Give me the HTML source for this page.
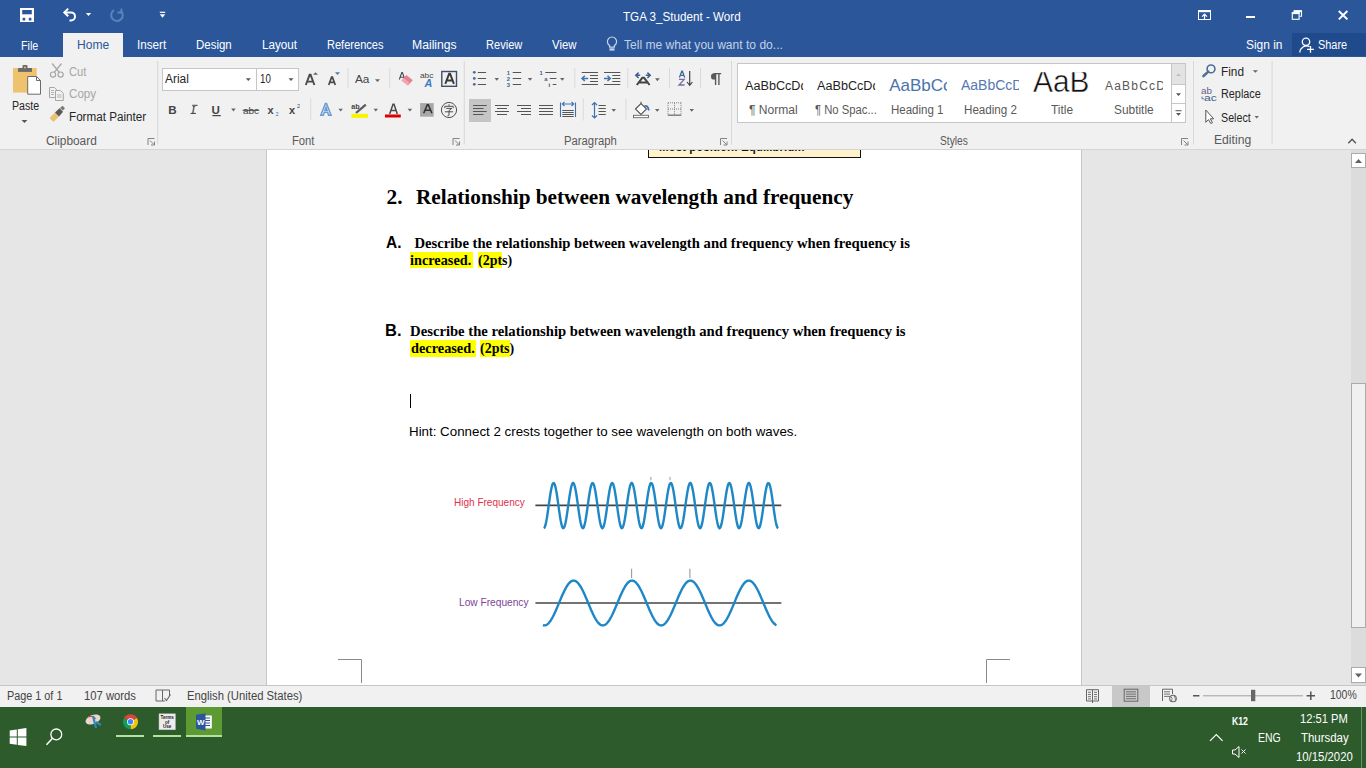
<!DOCTYPE html>
<html><head><meta charset="utf-8"><style>
*{margin:0;padding:0;box-sizing:border-box}
html,body{width:1366px;height:768px;overflow:hidden;background:#E6E6E6;position:relative;font-family:"Liberation Sans",sans-serif}
.t{position:absolute;white-space:nowrap;transform-origin:0 0}
.r{position:absolute}
svg{position:absolute;overflow:visible}

</style></head><body>
<div class="r" style="left:0px;top:0px;width:1366px;height:57px;background:#2B579A;"></div>
<div class="r" style="left:63px;top:33px;width:60px;height:24px;background:#F1F1F1;"></div>
<div class="r" style="left:1292px;top:33px;width:74px;height:23px;background:#1F4B8C;"></div>
<div class="r" style="left:0px;top:57px;width:1366px;height:92px;background:#F1F1F1;"></div>
<div class="r" style="left:0px;top:149px;width:1366px;height:1px;background:#D4D4D4;"></div>
<div class="r" style="left:266px;top:150px;width:1px;height:535px;background:#C6C6C6;"></div>
<div class="r" style="left:267px;top:150px;width:814px;height:535px;background:#fff;"></div>
<div class="r" style="left:1081px;top:150px;width:1px;height:535px;background:#C6C6C6;"></div>
<div class="r" style="left:1351px;top:150px;width:15px;height:535px;background:#DCDCDC;"></div>
<div class="r" style="left:0px;top:685px;width:1366px;height:1px;background:#C6C6C6;"></div>
<div class="r" style="left:0px;top:686px;width:1366px;height:21px;background:#F1F1F1;"></div>
<div class="r" style="left:0px;top:707px;width:1366px;height:61px;background:#2D5B2B;"></div>
<div class="r" style="left:162px;top:68px;width:137px;height:23px;background:#fff;border:1px solid #C6C6C6"></div>
<div class="r" style="left:256px;top:69px;width:1px;height:21px;background:#C6C6C6;"></div>
<div class="r" style="left:737px;top:63px;width:449px;height:60px;background:#fff;border:1px solid #C6C6C6"></div>
<div class="r" style="left:1171px;top:63px;width:15px;height:60px;background:#fff;border:1px solid #C6C6C6"></div>
<div class="r" style="left:1172px;top:64px;width:13px;height:20px;background:#E3E3E3;"></div>
<div class="r" style="left:1171px;top:84px;width:15px;height:1px;background:#C6C6C6;"></div>
<div class="r" style="left:1171px;top:103px;width:15px;height:1px;background:#C6C6C6;"></div>
<div class="r" style="left:469px;top:99px;width:22px;height:23px;background:#C5C5C5;"></div>
<div class="r" style="left:1112px;top:686px;width:38px;height:21px;background:#C8C8C8;"></div>
<div class="r" style="left:186px;top:707px;width:36px;height:30px;background:#5E9A34;"></div>
<div class="r" style="left:116px;top:735px;width:28px;height:2px;background:#B4E29A;"></div>
<div class="r" style="left:153px;top:735px;width:28px;height:2px;background:#B4E29A;"></div>
<div class="r" style="left:186px;top:735px;width:36px;height:2px;background:#B4E29A;"></div>
<div class="r" style="left:410px;top:252px;width:63px;height:16px;background:#FFFF00;"></div>
<div class="r" style="left:477.6px;top:252px;width:24.4px;height:16px;background:#FFFF00;"></div>
<div class="r" style="left:410px;top:340px;width:66px;height:16.5px;background:#FFFF00;"></div>
<div class="r" style="left:479.5px;top:340px;width:30.5px;height:16.5px;background:#FFFF00;"></div>
<div class="r" style="left:648px;top:150px;width:213px;height:7.6px;background:#FFF2CC;border:1.7px solid #111;border-top:none"></div>
<div class="r" style="left:410px;top:394px;width:1px;height:14px;background:#000;"></div>
<div class="r" style="left:1351px;top:153px;width:15px;height:15px;background:#fff;border:1px solid #ABABAB"></div>
<div class="r" style="left:1351px;top:383px;width:15px;height:245px;background:#F0F0F0;border:1px solid #ABABAB"></div>
<div class="r" style="left:1351px;top:667px;width:15px;height:16px;background:#fff;border:1px solid #ABABAB"></div>
<svg width="1366" height="768" style="left:0;top:0" viewBox="0 0 1366 768">
<rect x="20" y="8" width="14" height="14" fill="#fff"/>
<rect x="22.2" y="10" width="9.6" height="4.3" fill="#2B579A"/>
<rect x="22.6" y="17.8" width="2.6" height="2.7" fill="#2B579A"/>
<rect x="28.8" y="17.8" width="2.6" height="2.7" fill="#2B579A"/>
<path d="M65 12.4H71A4 4 0 0 1 71 20.4H69.5" fill="none" stroke="#fff" stroke-width="2"/>
<path d="M68.2 8.6L64.3 12.4L68.2 16.2" fill="none" stroke="#fff" stroke-width="2"/>
<path d="M85.8 13H91.2L88.5 15.9Z" fill="#fff"/>
<path d="M114 10.2A5.8 5.8 0 1 0 120.5 10.6" fill="none" stroke="#5B83BE" stroke-width="2"/>
<path d="M121.5 8.5V12.5H117.5" fill="none" stroke="#5B83BE" stroke-width="1.8"/>
<rect x="159.8" y="11.7" width="5.4" height="1.2" fill="#fff"/>
<path d="M159.8 14.3H165.2L162.5 17.7Z" fill="#fff"/>
<rect x="1198.5" y="10.5" width="12" height="9" fill="none" stroke="#fff" stroke-width="1"/>
<rect x="1198" y="10" width="13" height="2.2" fill="#fff"/>
<path d="M1204.5 19.5V14.2M1202 16.6L1204.5 14.2L1207 16.6" fill="none" stroke="#fff" stroke-width="1.2"/>
<rect x="1246" y="16" width="9" height="2" fill="#fff"/>
<path d="M1294.2 12.3V10.9H1301.5V16.3H1299.5" fill="none" stroke="#fff" stroke-width="1.1"/>
<rect x="1293.7" y="10.4" width="8.3" height="1.8" fill="#fff"/>
<rect x="1292.3" y="12.8" width="6.8" height="6.5" fill="none" stroke="#fff" stroke-width="1.1"/>
<rect x="1291.8" y="12.3" width="7.8" height="1.8" fill="#fff"/>
<path d="M1338.8 11L1347.4 19.4M1347.4 11L1338.8 19.4" stroke="#fff" stroke-width="2"/>
<circle cx="1306" cy="41.8" r="3.7" fill="none" stroke="#fff" stroke-width="1.3"/>
<path d="M1299.8 52.5A6.8 6.8 0 0 1 1309.5 46.6" fill="none" stroke="#fff" stroke-width="1.3"/>
<path d="M1310.5 46V52.8M1307.1 49.4H1313.9" stroke="#fff" stroke-width="1.3"/>
<path d="M609.6 47.2V45.5A4.6 4.6 0 1 1 614.4 45.5V47.2Z" fill="none" stroke="#C6D4EC" stroke-width="1.2"/>
<rect x="609.5" y="48.3" width="5" height="2.3" fill="#C6D4EC"/>
<rect x="13" y="68" width="23.7" height="24.6" fill="#EFC36E"/>
<rect x="18.1" y="68" width="13.9" height="3.9" fill="#6A6A6A"/>
<rect x="22.5" y="65" width="5" height="4" rx="1" fill="#6A6A6A"/>
<circle cx="25" cy="67.5" r="0.9" fill="#EFC36E"/>
<path d="M27.7 76.5H36.5L40.5 80.5V94.2H27.7Z" fill="#fff" stroke="#6A6A6A" stroke-width="1"/>
<path d="M36.5 76.5V80.5H40.5" fill="none" stroke="#6A6A6A" stroke-width="1"/>
<path d="M21.5 120H27.4L24.45 123Z" fill="#555"/>
<circle cx="53" cy="74.6" r="2.6" fill="none" stroke="#A6A6A6" stroke-width="1.2"/>
<circle cx="60.6" cy="74.6" r="2.6" fill="none" stroke="#A6A6A6" stroke-width="1.2"/>
<path d="M54.3 72.3L61.5 63.5M59.3 72.3L52.1 63.5" stroke="#A6A6A6" stroke-width="1.3"/>
<path d="M49.5 87.5H54.5L56.5 89.5V97.5H49.5Z" fill="#F1F1F1" stroke="#A6A6A6" stroke-width="1"/>
<path d="M51 90.5H54M51 92.5H54M51 94.5H54" stroke="#A6A6A6" stroke-width="0.8"/>
<path d="M55.5 90.5H60.5L63.3 93.3V100.5H55.5Z" fill="#F1F1F1" stroke="#A6A6A6" stroke-width="1"/>
<path d="M57 95H61.5M57 97H61.5" stroke="#A6A6A6" stroke-width="0.8"/>
<path d="M49.5 118L55 112.5L59 116.5L53.5 122Z" fill="#EDC172"/>
<path d="M55 112.5L59.5 108.3L63 111.8L59 116.5Z" fill="#595959"/>
<path d="M60 108L62.5 105.8L65 108.2L62.8 110.5Z" fill="#6F7F6A"/>
<path d="M245.8 78.2H250.8L248.3 81Z" fill="#555"/>
<path d="M288.5 78.2H293.5L291.0 81Z" fill="#555"/>
<path d="M305.8 85L309.6 74.8H310.6L314.4 85M307.2 81.6H313" fill="none" stroke="#4A4A4A" stroke-width="1.9"/>
<path d="M313 74.7H318L315.5 72.3Z" fill="#666"/>
<path d="M328.7 85L331.6 77.2H332.4L335.3 85M329.9 82.3H334.1" fill="none" stroke="#4A4A4A" stroke-width="1.7"/>
<path d="M335 72.3H340L337.5 74.9Z" fill="#4A7EBB"/>
<rect x="347.5" y="68" width="1" height="20" fill="#DADADA"/>
<rect x="389.2" y="68" width="1" height="20" fill="#DADADA"/>
<rect x="310.2" y="98" width="1" height="22" fill="#DADADA"/>
<path d="M375 79.2H380L377.5 82Z" fill="#666"/>
<path d="M399.3 79.5L401.8 72.6H402.4L404.9 79.5M400.2 77.2H404" fill="none" stroke="#4A4A4A" stroke-width="1.1"/>
<path d="M406.5 75L412.8 80.2L408 85.5L401.5 80.5Z" fill="#E8808F"/>
<path d="M401.5 80.5L403.8 78L409.7 83.3L408 85.5Z" fill="#F0A8B2"/>
<text x="420" y="77.8" font-family="Liberation Sans" font-size="7.6" fill="#444" textLength="13.4" lengthAdjust="spacingAndGlyphs">abc</text>
<text x="424.6" y="86.8" font-family="Liberation Sans" font-weight="bold" font-style="italic" font-size="10.8" fill="#3C7BC0">A</text>
<rect x="441.8" y="71.5" width="14.7" height="14.8" fill="none" stroke="#3F5066" stroke-width="1.4"/>
<path d="M445.3 83.8L449.1 73.8H450.1L453.9 83.8M446.7 80.5H452.5" fill="none" stroke="#3A3A3A" stroke-width="1.9"/>
<text x="168.3" y="113.7" font-family="Liberation Sans" font-weight="bold" font-size="11.6" fill="#444">B</text>
<text x="191" y="113.7" font-family="Liberation Serif" font-style="italic" font-size="12.5" fill="#444">I</text>
<path d="M192.2 105.3H197.6M190.6 113.4H196" stroke="#444" stroke-width="1"/>
<text x="211.6" y="113.7" font-family="Liberation Sans" font-weight="bold" font-size="11.6" fill="#444">U</text>
<rect x="212.4" y="115" width="8.4" height="1.2" fill="#444"/>
<path d="M231.2 108.6H235.7L233.45 111.6Z" fill="#666"/>
<text x="243" y="113.8" font-family="Liberation Sans" font-size="9.5" fill="#444" textLength="16" lengthAdjust="spacingAndGlyphs">abc</text>
<rect x="242.6" y="109.8" width="16.6" height="1" fill="#444"/>
<text x="267.4" y="113.7" font-family="Liberation Sans" font-weight="bold" font-size="11" fill="#444">x</text>
<text x="275.4" y="115.6" font-family="Liberation Sans" font-size="5.5" fill="#3F73B0">2</text>
<text x="289" y="113.7" font-family="Liberation Sans" font-weight="bold" font-size="11" fill="#444">x</text>
<text x="297" y="107.8" font-family="Liberation Sans" font-size="5.5" fill="#444">2</text>
<path d="M320.8 115.2L325.4 103.5H326.5L331.1 115.2H328.6L327.6 112.3H324.3L323.3 115.2ZM325 110.3H327L326 107.3Z" fill="#EAF3FB" stroke="#6C9BD2" stroke-width="1.5"/>
<path d="M338.4 108.8H342.9L340.65 111.6Z" fill="#666"/>
<text x="351.2" y="108.9" font-family="Liberation Sans" font-weight="bold" font-size="7.2" fill="#444">ab</text>
<path d="M356 113L365.8 104.6" stroke="#5A5A5A" stroke-width="2.3"/>
<rect x="351.4" y="113.9" width="16.5" height="4" fill="#F6F600"/>
<path d="M373.6 108.8H378L375.8 111.6Z" fill="#666"/>
<path d="M389.7 113.9L393 104.3H394L397.3 113.9M390.8 110.6H396.2" fill="none" stroke="#4A4A4A" stroke-width="1.5"/>
<rect x="385" y="114.5" width="15.8" height="3" fill="#E00000"/>
<path d="M407.6 108.8H412.2L409.9 111.6Z" fill="#666"/>
<rect x="420.1" y="103.1" width="13.6" height="13.6" fill="#A8A8A8"/>
<path d="M423.7 113.3L427.3 104.8H428.3L431.9 113.3M425 110.3H430.6" fill="none" stroke="#333" stroke-width="1.6"/>
<circle cx="449" cy="110" r="7.6" fill="none" stroke="#505050" stroke-width="1"/>
<path d="M449 104.3V105.9M444.8 108.2V106.3H453.2V108.2M446.2 108.4H451.8L449 110.6V115.1Q449 116 447.6 115.7M444.9 111.8H453.1" fill="none" stroke="#444" stroke-width="0.95"/>
<path d="M148 145V138.5H154.5" fill="none" stroke="#777" stroke-width="0.9"/><path d="M150 140.5L154 144.5M154.5 141.5V145H151" fill="none" stroke="#777" stroke-width="0.9"/>
<path d="M453 145V138.5H459.5" fill="none" stroke="#777" stroke-width="0.9"/><path d="M455 140.5L459 144.5M459.5 141.5V145H456" fill="none" stroke="#777" stroke-width="0.9"/>
<path d="M720.5 145V138.5H727.0" fill="none" stroke="#777" stroke-width="0.9"/><path d="M722.5 140.5L726.5 144.5M727.0 141.5V145H723.5" fill="none" stroke="#777" stroke-width="0.9"/>
<path d="M1181.5 145V138.5H1188.0" fill="none" stroke="#777" stroke-width="0.9"/><path d="M1183.5 140.5L1187.5 144.5M1188.0 141.5V145H1184.5" fill="none" stroke="#777" stroke-width="0.9"/>
<rect x="157.2" y="61" width="1" height="83.5" fill="#D8D8D8"/>
<rect x="463.8" y="61" width="1" height="83.5" fill="#D8D8D8"/>
<rect x="731" y="61" width="1" height="83.5" fill="#D8D8D8"/>
<rect x="1193" y="61" width="1" height="83.5" fill="#D8D8D8"/>
<rect x="1271.6" y="61" width="1" height="83.5" fill="#D8D8D8"/>
<circle cx="474.3" cy="72.3" r="1.4" fill="#4F6E92"/>
<rect x="477.8" y="72" width="8.3" height="1" fill="#555"/>
<rect x="512.7" y="72" width="8.5" height="1" fill="#555"/>
<circle cx="474.3" cy="78.4" r="1.4" fill="#4F6E92"/>
<rect x="477.8" y="78" width="8.3" height="1" fill="#555"/>
<rect x="512.7" y="78" width="8.5" height="1" fill="#555"/>
<circle cx="474.3" cy="84.3" r="1.4" fill="#4F6E92"/>
<rect x="477.8" y="84" width="8.3" height="1" fill="#555"/>
<rect x="512.7" y="84" width="8.5" height="1" fill="#555"/>
<path d="M494.5 78H499L496.75 80.8Z" fill="#666"/>
<path d="M527.8 78H532.3L530.05 80.8Z" fill="#666"/>
<path d="M560 78H564.5L562.25 80.8Z" fill="#666"/>
<text x="506.8" y="74.6" font-family="Liberation Sans" font-weight="bold" font-size="5.8" fill="#3F5F86">1</text>
<text x="506.8" y="80.7" font-family="Liberation Sans" font-weight="bold" font-size="5.8" fill="#3F5F86">2</text>
<text x="506.8" y="86.6" font-family="Liberation Sans" font-weight="bold" font-size="5.8" fill="#3F5F86">3</text>
<text x="539.6" y="74.6" font-family="Liberation Sans" font-weight="bold" font-size="5.8" fill="#3F5F86">1</text>
<text x="544.2" y="80.7" font-family="Liberation Sans" font-weight="bold" font-size="5.8" fill="#3F5F86">a</text>
<text x="548.6" y="86.6" font-family="Liberation Sans" font-weight="bold" font-size="5.8" fill="#444">i</text>
<rect x="545.3" y="72" width="11.1" height="1" fill="#555"/><rect x="549.8" y="78" width="6.6" height="1" fill="#555"/><rect x="552.7" y="84" width="3.7" height="1" fill="#555"/>
<rect x="574.3" y="68" width="1" height="20" fill="#DADADA"/>
<rect x="581.7" y="72" width="16.3" height="1" fill="#555"/><rect x="581.7" y="84" width="16.3" height="1" fill="#555"/>
<rect x="590.0" y="75" width="8" height="1" fill="#555"/>
<rect x="590.0" y="78" width="8" height="1" fill="#555"/>
<rect x="590.0" y="81" width="8" height="1" fill="#555"/>
<path d="M588.2 78.4H582.3000000000001M584.8000000000001 75.8L582.0 78.4L584.8000000000001 81" fill="none" stroke="#3F73B0" stroke-width="1.5"/>
<rect x="604" y="72" width="16.3" height="1" fill="#555"/><rect x="604" y="84" width="16.3" height="1" fill="#555"/>
<rect x="612.3" y="75" width="8" height="1" fill="#555"/>
<rect x="612.3" y="78" width="8" height="1" fill="#555"/>
<rect x="612.3" y="81" width="8" height="1" fill="#555"/>
<path d="M604 78.4H610M607.5 75.8L610.3 78.4L607.5 81" fill="none" stroke="#3F73B0" stroke-width="1.5"/>
<rect x="627.3" y="68" width="1" height="20" fill="#DADADA"/>
<path d="M636.8 85L642.3 77.8H644.1L649.6 85M639.2 82.6H647.2" fill="none" stroke="#444" stroke-width="2"/>
<path d="M638.6 72.6L635.8 75.3L638.6 78M635.8 75.3H640.2M647.4 72.6L650.2 75.3L647.4 78M650.2 75.3H645.8" fill="none" stroke="#3D5F8A" stroke-width="1.5"/>
<path d="M655 78.3H659.8L657.4 81.2Z" fill="#666"/>
<rect x="669" y="68" width="1" height="20" fill="#DADADA"/>
<path d="M679.4 77.6L681.8 71.2H682.4L684.7 77.6M680.3 75.4H683.9" fill="none" stroke="#3F6C9E" stroke-width="1.3"/>
<path d="M679 79.4H684.2L679 85H684.6" fill="none" stroke="#7E6B9E" stroke-width="1.3"/>
<path d="M689.7 71V85.3M687 82L689.7 85.4L692.4 82" fill="none" stroke="#444" stroke-width="1.2"/>
<rect x="700" y="68" width="1" height="20" fill="#DADADA"/>
<path d="M715.6 73.6V85M718.9 73.6V85M714 73.6H721.2" fill="none" stroke="#5A5A5A" stroke-width="1.4"/><path d="M715.6 73.2H714.2A3.2 3.2 0 0 0 714.2 79.6H715.6Z" fill="#5A5A5A"/>
<rect x="473" y="105" width="13.699999999999989" height="1" fill="#555"/><rect x="473" y="108" width="10.5" height="1" fill="#555"/><rect x="473" y="111" width="13.699999999999989" height="1" fill="#555"/><rect x="473" y="114" width="10.5" height="1" fill="#555"/>
<rect x="495" y="105" width="14" height="1" fill="#555"/><rect x="497" y="108" width="10" height="1" fill="#555"/><rect x="495" y="111" width="14" height="1" fill="#555"/><rect x="497" y="114" width="10" height="1" fill="#555"/>
<rect x="517" y="105" width="14" height="1" fill="#555"/><rect x="521" y="108" width="10" height="1" fill="#555"/><rect x="517" y="111" width="14" height="1" fill="#555"/><rect x="521" y="114" width="10" height="1" fill="#555"/>
<rect x="539" y="105" width="14" height="1" fill="#555"/><rect x="539" y="108" width="14" height="1" fill="#555"/><rect x="539" y="111" width="14" height="1" fill="#555"/><rect x="539" y="114" width="14" height="1" fill="#555"/>
<path d="M560.5 102.5V117M575.5 102.5V117" stroke="#3F73B0" stroke-width="1.1"/>
<path d="M562.5 104H573.5M564.5 102L562.3 104L564.5 106M571.5 102L573.7 104L571.5 106" fill="none" stroke="#3F73B0" stroke-width="1.1"/>
<rect x="562.3" y="110" width="11.4" height="1" fill="#555"/>
<rect x="562.3" y="112" width="11.4" height="1" fill="#555"/>
<rect x="562.3" y="114" width="11.4" height="1" fill="#555"/>
<rect x="562.3" y="116" width="11.4" height="1" fill="#555"/>
<rect x="582.8" y="98.5" width="1" height="22" fill="#DADADA"/>
<path d="M594.5 102.5V118M592 105L594.5 102.5L597 105M592 115.5L594.5 118L597 115.5" fill="none" stroke="#3F73B0" stroke-width="1.2"/>
<rect x="598.5" y="105" width="7.3" height="1" fill="#555"/>
<rect x="598.5" y="108" width="7.3" height="1" fill="#555"/>
<rect x="598.5" y="111" width="7.3" height="1" fill="#555"/>
<rect x="598.5" y="114" width="7.3" height="1" fill="#555"/>
<path d="M611.5 109H616L613.75 111.8Z" fill="#666"/>
<rect x="625.5" y="98.5" width="1" height="22" fill="#DADADA"/>
<path d="M635.5 109L641 103.5L646.5 109L641 114.5Z" fill="#fff" stroke="#555" stroke-width="1.1"/>
<path d="M641 103.5V101.8" stroke="#555" stroke-width="1.1"/>
<path d="M644.5 106Q648 105 648.8 110.5" fill="none" stroke="#3F73B0" stroke-width="1.8"/>
<rect x="633.5" y="115.3" width="15" height="2.4" fill="#fff" stroke="#666" stroke-width="0.9"/>
<path d="M655 109H659.5L657.25 111.8Z" fill="#666"/>
<path d="M668 102.8H681M668 109H681M674.5 102.8V115M668 102.8V115M681 102.8V115" fill="none" stroke="#777" stroke-width="0.9" stroke-dasharray="1 1"/>
<rect x="667.8" y="114.6" width="13.5" height="1.1" fill="#555"/>
<path d="M689.5 109H694L691.75 111.8Z" fill="#666"/>
<path d="M1176 76H1181L1178.5 73.5Z" fill="#BDBDBD"/>
<path d="M1176 93.2H1181L1178.5 95.9Z" fill="#555"/>
<rect x="1175.5" y="110.2" width="6" height="1" fill="#555"/>
<path d="M1176 113.1H1181L1178.5 115.8Z" fill="#555"/>
<circle cx="1211" cy="68.9" r="3.9" fill="none" stroke="#4A6E99" stroke-width="1.6"/>
<path d="M1208.3 71.6L1203.5 76" stroke="#4F6F95" stroke-width="2.6" stroke-linecap="round"/>
<path d="M1252.7 70.2H1258L1255.35 72.8Z" fill="#666"/>
<text x="1201" y="93.8" font-family="Liberation Sans" font-size="9.4" fill="#6C5B8A" textLength="11" lengthAdjust="spacingAndGlyphs">ab</text>
<text x="1204" y="100.8" font-family="Liberation Sans" font-size="9.4" fill="#3E5E86" textLength="12.8" lengthAdjust="spacingAndGlyphs">ac</text>
<path d="M1202 96.5V98.8H1204" fill="none" stroke="#3F73B0" stroke-width="0.9"/>
<path d="M1205.8 110V122.3L1208.5 119.6L1210.8 123.5L1212.5 122.6L1210.3 118.8H1213.7Z" fill="#fff" stroke="#555" stroke-width="1"/>
<path d="M1254.5 116H1258.9L1256.7 118.5Z" fill="#666"/>
<path d="M1348.3 143.2L1352.1 139.2L1355.9 143.2" fill="none" stroke="#555" stroke-width="1.4"/>
<path d="M338 659.5H361.5V683" fill="none" stroke="#8A8A8A" stroke-width="1"/>
<path d="M1010 659.5H986.5V683" fill="none" stroke="#8A8A8A" stroke-width="1"/>
<path d="M1355 163H1362L1358.5 159Z" fill="#606060"/>
<path d="M1355 673.5H1362L1358.5 677.5Z" fill="#606060"/>
<path d="M535.4 505.3H781.3" stroke="#444" stroke-width="1.7"/>
<polyline points="543.80,528.20 544.39,527.80 544.97,526.61 545.56,524.68 546.14,522.07 546.73,518.88 547.32,515.22 547.90,511.22 548.49,507.02 549.07,502.77 549.66,498.62 550.24,494.71 550.83,491.19 551.42,488.19 552.00,485.80 552.59,484.11 553.17,483.18 553.76,483.04 554.35,483.71 554.93,485.15 555.52,487.32 556.10,490.13 556.69,493.49 557.28,497.28 557.86,501.37 558.45,505.60 559.03,509.83 559.62,513.92 560.21,517.71 560.79,521.07 561.38,523.88 561.96,526.05 562.55,527.49 563.13,528.16 563.72,528.02 564.31,527.09 564.89,525.40 565.48,523.01 566.06,520.01 566.65,516.49 567.24,512.58 567.82,508.43 568.41,504.18 568.99,499.98 569.58,495.98 570.17,492.32 570.75,489.13 571.34,486.52 571.92,484.59 572.51,483.40 573.09,483.00 573.68,483.40 574.27,484.59 574.85,486.52 575.44,489.13 576.02,492.32 576.61,495.98 577.20,499.98 577.78,504.18 578.37,508.43 578.95,512.58 579.54,516.49 580.13,520.01 580.71,523.01 581.30,525.40 581.88,527.09 582.47,528.02 583.06,528.16 583.64,527.49 584.23,526.05 584.81,523.88 585.40,521.07 585.98,517.71 586.57,513.92 587.16,509.83 587.74,505.60 588.33,501.37 588.91,497.28 589.50,493.49 590.09,490.13 590.67,487.32 591.26,485.15 591.84,483.71 592.43,483.04 593.02,483.18 593.60,484.11 594.19,485.80 594.77,488.19 595.36,491.19 595.95,494.71 596.53,498.62 597.12,502.77 597.70,507.02 598.29,511.22 598.87,515.22 599.46,518.88 600.05,522.07 600.63,524.68 601.22,526.61 601.80,527.80 602.39,528.20 602.98,527.80 603.56,526.61 604.15,524.68 604.73,522.07 605.32,518.88 605.91,515.22 606.49,511.22 607.08,507.02 607.66,502.77 608.25,498.62 608.83,494.71 609.42,491.19 610.01,488.19 610.59,485.80 611.18,484.11 611.76,483.18 612.35,483.04 612.94,483.71 613.52,485.15 614.11,487.32 614.69,490.13 615.28,493.49 615.87,497.28 616.45,501.37 617.04,505.60 617.62,509.83 618.21,513.92 618.80,517.71 619.38,521.07 619.97,523.88 620.55,526.05 621.14,527.49 621.72,528.16 622.31,528.02 622.90,527.09 623.48,525.40 624.07,523.01 624.65,520.01 625.24,516.49 625.83,512.58 626.41,508.43 627.00,504.18 627.58,499.98 628.17,495.98 628.76,492.32 629.34,489.13 629.93,486.52 630.51,484.59 631.10,483.40 631.68,483.00 632.27,483.40 632.86,484.59 633.44,486.52 634.03,489.13 634.61,492.32 635.20,495.98 635.79,499.98 636.37,504.18 636.96,508.43 637.54,512.58 638.13,516.49 638.72,520.01 639.30,523.01 639.89,525.40 640.47,527.09 641.06,528.02 641.65,528.16 642.23,527.49 642.82,526.05 643.40,523.88 643.99,521.07 644.57,517.71 645.16,513.92 645.75,509.83 646.33,505.60 646.92,501.37 647.50,497.28 648.09,493.49 648.68,490.13 649.26,487.32 649.85,485.15 650.43,483.71 651.02,483.04 651.61,483.18 652.19,484.11 652.78,485.80 653.36,488.19 653.95,491.19 654.54,494.71 655.12,498.62 655.71,502.77 656.29,507.02 656.88,511.22 657.46,515.22 658.05,518.88 658.64,522.07 659.22,524.68 659.81,526.61 660.39,527.80 660.98,528.20 661.57,527.80 662.15,526.61 662.74,524.68 663.32,522.07 663.91,518.88 664.50,515.22 665.08,511.22 665.67,507.02 666.25,502.77 666.84,498.62 667.42,494.71 668.01,491.19 668.60,488.19 669.18,485.80 669.77,484.11 670.35,483.18 670.94,483.04 671.53,483.71 672.11,485.15 672.70,487.32 673.28,490.13 673.87,493.49 674.46,497.28 675.04,501.37 675.63,505.60 676.21,509.83 676.80,513.92 677.39,517.71 677.97,521.07 678.56,523.88 679.14,526.05 679.73,527.49 680.31,528.16 680.90,528.02 681.49,527.09 682.07,525.40 682.66,523.01 683.24,520.01 683.83,516.49 684.42,512.58 685.00,508.43 685.59,504.18 686.17,499.98 686.76,495.98 687.35,492.32 687.93,489.13 688.52,486.52 689.10,484.59 689.69,483.40 690.27,483.00 690.86,483.40 691.45,484.59 692.03,486.52 692.62,489.13 693.20,492.32 693.79,495.98 694.38,499.98 694.96,504.18 695.55,508.43 696.13,512.58 696.72,516.49 697.31,520.01 697.89,523.01 698.48,525.40 699.06,527.09 699.65,528.02 700.24,528.16 700.82,527.49 701.41,526.05 701.99,523.88 702.58,521.07 703.16,517.71 703.75,513.92 704.34,509.83 704.92,505.60 705.51,501.37 706.09,497.28 706.68,493.49 707.27,490.13 707.85,487.32 708.44,485.15 709.02,483.71 709.61,483.04 710.20,483.18 710.78,484.11 711.37,485.80 711.95,488.19 712.54,491.19 713.13,494.71 713.71,498.62 714.30,502.77 714.88,507.02 715.47,511.22 716.05,515.22 716.64,518.88 717.23,522.07 717.81,524.68 718.40,526.61 718.98,527.80 719.57,528.20 720.16,527.80 720.74,526.61 721.33,524.68 721.91,522.07 722.50,518.88 723.09,515.22 723.67,511.22 724.26,507.02 724.84,502.77 725.43,498.62 726.01,494.71 726.60,491.19 727.19,488.19 727.77,485.80 728.36,484.11 728.94,483.18 729.53,483.04 730.12,483.71 730.70,485.15 731.29,487.32 731.87,490.13 732.46,493.49 733.05,497.28 733.63,501.37 734.22,505.60 734.80,509.83 735.39,513.92 735.98,517.71 736.56,521.07 737.15,523.88 737.73,526.05 738.32,527.49 738.90,528.16 739.49,528.02 740.08,527.09 740.66,525.40 741.25,523.01 741.83,520.01 742.42,516.49 743.01,512.58 743.59,508.43 744.18,504.18 744.76,499.98 745.35,495.98 745.94,492.32 746.52,489.13 747.11,486.52 747.69,484.59 748.28,483.40 748.87,483.00 749.45,483.40 750.04,484.59 750.62,486.52 751.21,489.13 751.79,492.32 752.38,495.98 752.97,499.98 753.55,504.18 754.14,508.43 754.72,512.58 755.31,516.49 755.90,520.01 756.48,523.01 757.07,525.40 757.65,527.09 758.24,528.02 758.83,528.16 759.41,527.49 760.00,526.05 760.58,523.88 761.17,521.07 761.75,517.71 762.34,513.92 762.93,509.83 763.51,505.60 764.10,501.37 764.68,497.28 765.27,493.49 765.86,490.13 766.44,487.32 767.03,485.15 767.61,483.71 768.20,483.04 768.79,483.18 769.37,484.11 769.96,485.80 770.54,488.19 771.13,491.19 771.72,494.71 772.30,498.62 772.89,502.77 773.47,507.02 774.06,511.22 774.64,515.22 775.23,518.88 775.82,522.07 776.40,524.68 776.99,526.61 777.57,527.80 778.16,528.20" fill="none" stroke="#1E87C6" stroke-width="2.4"/>
<path d="M650.9 476.9V480.3M670 476.9V480.3" stroke="#999" stroke-width="1"/>
<path d="M535.4 603H781.3" stroke="#444" stroke-width="1.7"/>
<polyline points="542.90,625.11 543.48,625.29 544.07,625.39 544.65,625.39 545.24,625.31 545.82,625.14 546.40,624.88 546.99,624.54 547.57,624.11 548.16,623.60 548.74,623.00 549.32,622.33 549.91,621.58 550.49,620.76 551.08,619.87 551.66,618.91 552.24,617.89 552.83,616.81 553.41,615.67 554.00,614.49 554.58,613.26 555.16,611.98 555.75,610.68 556.33,609.34 556.92,607.98 557.50,606.60 558.08,605.20 558.67,603.80 559.25,602.39 559.84,600.99 560.42,599.59 561.00,598.21 561.59,596.84 562.17,595.50 562.76,594.19 563.34,592.92 563.92,591.68 564.51,590.49 565.09,589.35 565.68,588.26 566.26,587.23 566.84,586.26 567.43,585.36 568.01,584.53 568.60,583.77 569.18,583.09 569.76,582.48 570.35,581.96 570.93,581.52 571.52,581.16 572.10,580.89 572.68,580.71 573.27,580.61 573.85,580.61 574.44,580.69 575.02,580.86 575.60,581.12 576.19,581.46 576.77,581.89 577.36,582.40 577.94,583.00 578.52,583.67 579.11,584.42 579.69,585.24 580.28,586.13 580.86,587.09 581.44,588.11 582.03,589.19 582.61,590.33 583.20,591.51 583.78,592.74 584.36,594.02 584.95,595.32 585.53,596.66 586.12,598.02 586.70,599.40 587.28,600.80 587.87,602.20 588.45,603.61 589.04,605.01 589.62,606.41 590.20,607.79 590.79,609.16 591.37,610.50 591.96,611.81 592.54,613.08 593.12,614.32 593.71,615.51 594.29,616.65 594.88,617.74 595.46,618.77 596.04,619.74 596.63,620.64 597.21,621.47 597.80,622.23 598.38,622.91 598.96,623.52 599.55,624.04 600.13,624.48 600.72,624.84 601.30,625.11 601.88,625.29 602.47,625.39 603.05,625.39 603.64,625.31 604.22,625.14 604.80,624.88 605.39,624.54 605.97,624.11 606.56,623.60 607.14,623.00 607.72,622.33 608.31,621.58 608.89,620.76 609.48,619.87 610.06,618.91 610.64,617.89 611.23,616.81 611.81,615.67 612.40,614.49 612.98,613.26 613.56,611.98 614.15,610.68 614.73,609.34 615.32,607.98 615.90,606.60 616.48,605.20 617.07,603.80 617.65,602.39 618.24,600.99 618.82,599.59 619.40,598.21 619.99,596.84 620.57,595.50 621.16,594.19 621.74,592.92 622.32,591.68 622.91,590.49 623.49,589.35 624.08,588.26 624.66,587.23 625.24,586.26 625.83,585.36 626.41,584.53 627.00,583.77 627.58,583.09 628.16,582.48 628.75,581.96 629.33,581.52 629.92,581.16 630.50,580.89 631.08,580.71 631.67,580.61 632.25,580.61 632.84,580.69 633.42,580.86 634.00,581.12 634.59,581.46 635.17,581.89 635.76,582.40 636.34,583.00 636.92,583.67 637.51,584.42 638.09,585.24 638.68,586.13 639.26,587.09 639.84,588.11 640.43,589.19 641.01,590.33 641.60,591.51 642.18,592.74 642.76,594.02 643.35,595.32 643.93,596.66 644.52,598.02 645.10,599.40 645.68,600.80 646.27,602.20 646.85,603.61 647.44,605.01 648.02,606.41 648.60,607.79 649.19,609.16 649.77,610.50 650.36,611.81 650.94,613.08 651.52,614.32 652.11,615.51 652.69,616.65 653.28,617.74 653.86,618.77 654.44,619.74 655.03,620.64 655.61,621.47 656.20,622.23 656.78,622.91 657.36,623.52 657.95,624.04 658.53,624.48 659.12,624.84 659.70,625.11 660.28,625.29 660.87,625.39 661.45,625.39 662.04,625.31 662.62,625.14 663.20,624.88 663.79,624.54 664.37,624.11 664.96,623.60 665.54,623.00 666.12,622.33 666.71,621.58 667.29,620.76 667.88,619.87 668.46,618.91 669.04,617.89 669.63,616.81 670.21,615.67 670.80,614.49 671.38,613.26 671.96,611.98 672.55,610.68 673.13,609.34 673.72,607.98 674.30,606.60 674.88,605.20 675.47,603.80 676.05,602.39 676.64,600.99 677.22,599.59 677.80,598.21 678.39,596.84 678.97,595.50 679.56,594.19 680.14,592.92 680.72,591.68 681.31,590.49 681.89,589.35 682.48,588.26 683.06,587.23 683.64,586.26 684.23,585.36 684.81,584.53 685.40,583.77 685.98,583.09 686.56,582.48 687.15,581.96 687.73,581.52 688.32,581.16 688.90,580.89 689.48,580.71 690.07,580.61 690.65,580.61 691.24,580.69 691.82,580.86 692.40,581.12 692.99,581.46 693.57,581.89 694.16,582.40 694.74,583.00 695.32,583.67 695.91,584.42 696.49,585.24 697.08,586.13 697.66,587.09 698.24,588.11 698.83,589.19 699.41,590.33 700.00,591.51 700.58,592.74 701.16,594.02 701.75,595.32 702.33,596.66 702.92,598.02 703.50,599.40 704.08,600.80 704.67,602.20 705.25,603.61 705.84,605.01 706.42,606.41 707.00,607.79 707.59,609.16 708.17,610.50 708.76,611.81 709.34,613.08 709.92,614.32 710.51,615.51 711.09,616.65 711.68,617.74 712.26,618.77 712.84,619.74 713.43,620.64 714.01,621.47 714.60,622.23 715.18,622.91 715.76,623.52 716.35,624.04 716.93,624.48 717.52,624.84 718.10,625.11 718.68,625.29 719.27,625.39 719.85,625.39 720.44,625.31 721.02,625.14 721.60,624.88 722.19,624.54 722.77,624.11 723.36,623.60 723.94,623.00 724.52,622.33 725.11,621.58 725.69,620.76 726.28,619.87 726.86,618.91 727.44,617.89 728.03,616.81 728.61,615.67 729.20,614.49 729.78,613.26 730.36,611.98 730.95,610.68 731.53,609.34 732.12,607.98 732.70,606.60 733.28,605.20 733.87,603.80 734.45,602.39 735.04,600.99 735.62,599.59 736.20,598.21 736.79,596.84 737.37,595.50 737.96,594.19 738.54,592.92 739.12,591.68 739.71,590.49 740.29,589.35 740.88,588.26 741.46,587.23 742.04,586.26 742.63,585.36 743.21,584.53 743.80,583.77 744.38,583.09 744.96,582.48 745.55,581.96 746.13,581.52 746.72,581.16 747.30,580.89 747.88,580.71 748.47,580.61 749.05,580.61 749.64,580.69 750.22,580.86 750.80,581.12 751.39,581.46 751.97,581.89 752.56,582.40 753.14,583.00 753.72,583.67 754.31,584.42 754.89,585.24 755.48,586.13 756.06,587.09 756.64,588.11 757.23,589.19 757.81,590.33 758.40,591.51 758.98,592.74 759.56,594.02 760.15,595.32 760.73,596.66 761.32,598.02 761.90,599.40 762.48,600.80 763.07,602.20 763.65,603.61 764.24,605.01 764.82,606.41 765.40,607.79 765.99,609.16 766.57,610.50 767.16,611.81 767.74,613.08 768.32,614.32 768.91,615.51 769.49,616.65 770.08,617.74 770.66,618.77 771.24,619.74 771.83,620.64 772.41,621.47 773.00,622.23 773.58,622.91 774.16,623.52 774.75,624.04 775.33,624.48 775.92,624.84 776.50,625.11" fill="none" stroke="#1E87C6" stroke-width="2.4"/>
<path d="M631.6 568.7V578M689.9 568.7V578" stroke="#999" stroke-width="1.1"/>
<path d="M156 690V701H162.5M156 690H162.5V701M162.5 690H169.5V696M162.5 701H165" fill="none" stroke="#666" stroke-width="1"/>
<path d="M164.5 698L166.5 700.5L170.5 694.5" fill="none" stroke="#666" stroke-width="1.1"/>
<path d="M1086.5 689.7H1092.5V701H1086.5ZM1092.5 689.7H1098.5V701H1092.5Z" fill="none" stroke="#666" stroke-width="1"/>
<path d="M1088 692.3H1091M1094 692.3H1097" stroke="#666" stroke-width="0.9"/>
<path d="M1088 694.5H1091M1094 694.5H1097" stroke="#666" stroke-width="0.9"/>
<path d="M1088 696.7H1091M1094 696.7H1097" stroke="#666" stroke-width="0.9"/>
<path d="M1088 698.9H1091M1094 698.9H1097" stroke="#666" stroke-width="0.9"/>
<path d="M1092.5 701V703" stroke="#666" stroke-width="1"/>
<rect x="1124.2" y="689.2" width="13.6" height="12" fill="none" stroke="#666" stroke-width="1"/>
<path d="M1126 691.8H1136" stroke="#666" stroke-width="0.9"/>
<path d="M1126 694.1H1136" stroke="#666" stroke-width="0.9"/>
<path d="M1126 696.4H1136" stroke="#666" stroke-width="0.9"/>
<path d="M1126 698.7H1136" stroke="#666" stroke-width="0.9"/>
<path d="M1162.5 701V689.2H1172.5V694" fill="none" stroke="#666" stroke-width="1"/>
<path d="M1164 691.8H1170" stroke="#666" stroke-width="0.9"/>
<path d="M1164 694.1H1170" stroke="#666" stroke-width="0.9"/>
<path d="M1164 696.4H1170" stroke="#666" stroke-width="0.9"/>
<circle cx="1173" cy="698.5" r="3.3" fill="#F1F1F1" stroke="#666" stroke-width="1.1"/>
<path d="M1171 696.5Q1173 698.5 1171.5 701M1174 695.8Q1175.5 698.5 1175.5 700" fill="none" stroke="#666" stroke-width="0.8"/>
<rect x="1193" y="695" width="6.4" height="1.5" fill="#555"/>
<rect x="1203" y="695.3" width="100" height="1" fill="#A0A0A0"/>
<rect x="1251" y="689.8" width="4.3" height="11.4" fill="#666"/>
<path d="M1306.6 695.8H1315M1310.8 691.6V700" stroke="#555" stroke-width="1.5"/>
<path d="M9.7 730.5L16.8 729.4V736.6H9.7ZM17.8 729.2L26.4 728V736.6H17.8ZM9.7 737.6H16.8V744.8L9.7 743.8ZM17.8 737.6H26.4V746L17.8 744.9Z" fill="#fff"/>
<circle cx="56.3" cy="734.4" r="5.4" fill="none" stroke="#fff" stroke-width="1.3"/>
<path d="M52.5 738.2L46.5 744.8" stroke="#fff" stroke-width="1.5"/>
<ellipse cx="93" cy="719.5" rx="7.8" ry="4.5" transform="rotate(-20 93 719.5)" fill="#E8D8D0"/>
<path d="M88 717Q93 715 96 719" stroke="#D05050" stroke-width="1.2" fill="none"/>
<path d="M93 716L96 728M96 722L101 725" stroke="#2F86B8" stroke-width="2.2"/>
<path d="M130.5 721.8L124 718.05A7.5 7.5 0 0 1 137 718.05Z" fill="#DB4437"/>
<path d="M130.5 721.8L137 718.05A7.5 7.5 0 0 1 130.5 729.3Z" fill="#F4C20D"/>
<path d="M130.5 721.8L130.5 729.3A7.5 7.5 0 0 1 124 718.05Z" fill="#0F9D58"/>
<circle cx="130.5" cy="721.8" r="3.5" fill="#fff"/><circle cx="130.5" cy="721.8" r="2.7" fill="#4285F4"/>
<rect x="159" y="713.8" width="16.4" height="16" fill="#EDEDED" stroke="#bbb" stroke-width="0.5"/>
<text x="167.2" y="719" text-anchor="middle" font-family="Liberation Sans" font-weight="bold" font-size="4.6" fill="#222">Terms</text>
<text x="167.2" y="723.5" text-anchor="middle" font-family="Liberation Sans" font-weight="bold" font-size="4.6" fill="#222">of</text>
<text x="167.2" y="728" text-anchor="middle" font-family="Liberation Sans" font-weight="bold" font-size="4.6" fill="#222">Use</text>
<rect x="202" y="715.5" width="9.8" height="13" fill="#fff"/>
<path d="M205 718H210M205 720.5H210M205 723H210M205 725.5H210" stroke="#2B579A" stroke-width="1"/>
<path d="M196 714.8L205.5 713.2V730.5L196 728.8Z" fill="#2B579A"/>
<text x="197" y="725.2" font-family="Liberation Sans" font-weight="bold" font-size="8" fill="#fff">W</text>
<path d="M1210 740.8L1216.3 734.5L1222.6 740.8" fill="none" stroke="#fff" stroke-width="1.2"/>
<path d="M1232.5 750H1235L1239 746.5V757.5L1235 754H1232.5Z" fill="none" stroke="#fff" stroke-width="1"/>
<path d="M1241.5 749.5L1245.5 753.5M1245.5 749.5L1241.5 753.5" stroke="#fff" stroke-width="1"/>
<rect x="1361" y="707" width="1" height="61" fill="#6B8F6A"/>
</svg>
<div class="t" style="left:623.30px;top:10.74px;font:normal 12px/1 'Liberation Sans';color:#fff;transform:scaleX(0.9714);">TGA 3_Student - Word</div>
<div class="t" style="left:20.60px;top:39.64px;font:normal 12px/1 'Liberation Sans';color:#fff;transform:scaleX(0.8951);">File</div>
<div class="t" style="left:76.50px;top:38.84px;font:normal 12px/1 'Liberation Sans';color:#2B579A;transform:scaleX(1.0051);">Home</div>
<div class="t" style="left:137.23px;top:39.24px;font:normal 12px/1 'Liberation Sans';color:#fff;transform:scaleX(0.9704);">Insert</div>
<div class="t" style="left:196.20px;top:39.24px;font:normal 12px/1 'Liberation Sans';color:#fff;transform:scaleX(0.9569);">Design</div>
<div class="t" style="left:261.50px;top:39.24px;font:normal 12px/1 'Liberation Sans';color:#fff;transform:scaleX(0.9729);">Layout</div>
<div class="t" style="left:326.50px;top:39.24px;font:normal 12px/1 'Liberation Sans';color:#fff;transform:scaleX(0.9207);">References</div>
<div class="t" style="left:412.00px;top:39.24px;font:normal 12px/1 'Liberation Sans';color:#fff;transform:scaleX(1.0155);">Mailings</div>
<div class="t" style="left:486.00px;top:39.24px;font:normal 12px/1 'Liberation Sans';color:#fff;transform:scaleX(0.9224);">Review</div>
<div class="t" style="left:552.00px;top:39.24px;font:normal 12px/1 'Liberation Sans';color:#fff;transform:scaleX(0.9492);">View</div>
<div class="t" style="left:624.00px;top:39.24px;font:normal 12px/1 'Liberation Sans';color:#C3D1E6;transform:scaleX(1.0048);">Tell me what you want to do...</div>
<div class="t" style="left:1245.70px;top:39.04px;font:normal 12px/1 'Liberation Sans';color:#fff;transform:scaleX(0.9940);">Sign in</div>
<div class="t" style="left:1318.00px;top:39.04px;font:normal 12px/1 'Liberation Sans';color:#fff;transform:scaleX(0.9089);">Share</div>
<div class="t" style="left:11.50px;top:99.54px;font:normal 12px/1 'Liberation Sans';color:#262626;transform:scaleX(0.8868);">Paste</div>
<div class="t" style="left:68.60px;top:65.64px;font:normal 12px/1 'Liberation Sans';color:#A6A6A6;transform:scaleX(0.9307);">Cut</div>
<div class="t" style="left:68.60px;top:88.44px;font:normal 12px/1 'Liberation Sans';color:#A6A6A6;transform:scaleX(0.9674);">Copy</div>
<div class="t" style="left:68.60px;top:111.24px;font:normal 12px/1 'Liberation Sans';color:#262626;transform:scaleX(0.9727);">Format Painter</div>
<div class="t" style="left:45.60px;top:134.64px;font:normal 12px/1 'Liberation Sans';color:#595959;transform:scaleX(0.9884);">Clipboard</div>
<div class="t" style="left:165.40px;top:73.44px;font:normal 12px/1 'Liberation Sans';color:#262626;transform:scaleX(0.9940);">Arial</div>
<div class="t" style="left:259.80px;top:73.44px;font:normal 12px/1 'Liberation Sans';color:#262626;transform:scaleX(0.8118);">10</div>
<div class="t" style="left:291.70px;top:134.64px;font:normal 12px/1 'Liberation Sans';color:#595959;transform:scaleX(0.9361);">Font</div>
<div class="t" style="left:563.50px;top:134.64px;font:normal 12px/1 'Liberation Sans';color:#595959;transform:scaleX(0.9410);">Paragraph</div>
<div class="t" style="left:940.40px;top:134.64px;font:normal 12px/1 'Liberation Sans';color:#595959;transform:scaleX(0.8538);">Styles</div>
<div class="t" style="left:1214.00px;top:134.24px;font:normal 12px/1 'Liberation Sans';color:#595959;transform:scaleX(1.0134);">Editing</div>
<div class="t" style="left:1220.70px;top:65.74px;font:normal 12px/1 'Liberation Sans';color:#262626;transform:scaleX(0.9837);">Find</div>
<div class="t" style="left:1220.70px;top:88.14px;font:normal 12px/1 'Liberation Sans';color:#262626;transform:scaleX(0.9041);">Replace</div>
<div class="t" style="left:1220.70px;top:111.54px;font:normal 12px/1 'Liberation Sans';color:#262626;transform:scaleX(0.8907);">Select</div>
<div class="t" style="left:749.00px;top:103.84px;font:normal 12px/1 'Liberation Sans';color:#595959;transform:scaleX(1.0045);">¶ Normal</div>
<div class="t" style="left:815.00px;top:103.84px;font:normal 12px/1 'Liberation Sans';color:#595959;transform:scaleX(0.9393);">¶ No Spac...</div>
<div class="t" style="left:891.00px;top:103.84px;font:normal 12px/1 'Liberation Sans';color:#595959;transform:scaleX(0.9594);">Heading 1</div>
<div class="t" style="left:963.70px;top:103.64px;font:normal 12px/1 'Liberation Sans';color:#595959;transform:scaleX(0.9685);">Heading 2</div>
<div class="t" style="left:1050.60px;top:103.64px;font:normal 12px/1 'Liberation Sans';color:#595959;transform:scaleX(0.9933);">Title</div>
<div class="t" style="left:1114.00px;top:103.64px;font:normal 12px/1 'Liberation Sans';color:#595959;transform:scaleX(0.9913);">Subtitle</div>
<div class="t" style="left:386.60px;top:186.84px;font:bold 21.33px/1 'Liberation Serif';color:#000;">2.</div>
<div class="t" style="left:416.20px;top:186.74px;font:bold 21.33px/1 'Liberation Serif';color:#000;transform:scaleX(0.9958);">Relationship between wavelength and frequency</div>
<div class="t" style="left:386.20px;top:235.16px;font:bold 16px/1 'Liberation Sans';color:#000;transform:scaleX(0.9643);">A.</div>
<div class="t" style="left:414.40px;top:236.31px;font:bold 14.67px/1 'Liberation Serif';color:#000;">Describe the relationship between wavelength and frequency when frequency is</div>
<div class="t" style="left:385.27px;top:323.06px;font:bold 16px/1 'Liberation Sans';color:#000;transform:scaleX(1.0306);">B.</div>
<div class="t lineB" style="left:410.10px;top:324.31px;font:bold 14.67px/1 'Liberation Serif';color:#000;">Describe the relationship between wavelength and frequency when frequency is</div>
<div class="t" style="left:409.00px;top:425.42px;font:normal 13.33px/1 'Liberation Sans';color:#000;">Hint: Connect 2 crests together to see wavelength on both waves.</div>
<div class="t" style="left:453.70px;top:497.29px;font:normal 11px/1 'Liberation Sans';color:#E2304C;transform:scaleX(0.9111);">High Frequency</div>
<div class="t" style="left:459.00px;top:597.19px;font:normal 11px/1 'Liberation Sans';color:#7D3F9B;transform:scaleX(0.9246);">Low Frequency</div>
<div class="t" style="left:410.30px;top:253.41px;font:bold 14.67px/1 'Liberation Serif';color:#000;transform:scaleX(0.9753);">increased.</div>
<div class="t" style="left:477.60px;top:253.41px;font:bold 14.67px/1 'Liberation Serif';color:#000;transform:scaleX(0.9543);">(2pts)</div>
<div class="t" style="left:410.70px;top:341.41px;font:bold 14.67px/1 'Liberation Serif';color:#000;transform:scaleX(0.9772);">decreased.</div>
<div class="t" style="left:480.00px;top:341.41px;font:bold 14.67px/1 'Liberation Serif';color:#000;transform:scaleX(0.9543);">(2pts)</div>
<div class="t" style="left:355.00px;top:73.28px;font:normal 11.6px/1 'Liberation Sans';color:#444;transform:scaleX(1.0181);">Aa</div>
<div class="t" style="left:744.80px;top:79.64px;font:normal 12px/1 'Liberation Sans';color:#1E1E1E;transform:scaleX(1.0530);clip-path:inset(-50px calc(100% - 55.27px) -50px -50px);">AaBbCcDd</div>
<div class="t" style="left:817.20px;top:79.64px;font:normal 12px/1 'Liberation Sans';color:#1E1E1E;transform:scaleX(1.0530);clip-path:inset(-50px calc(100% - 55.27px) -50px -50px);">AaBbCcDd</div>
<div class="t" style="left:889.20px;top:77.21px;font:normal 17px/1 'Liberation Sans';color:#4A72AC;clip-path:inset(-50px calc(100% - 57.80px) -50px -50px);">AaBbCc</div>
<div class="t" style="left:961.00px;top:77.95px;font:normal 14px/1 'Liberation Sans';color:#5578B0;clip-path:inset(-50px calc(100% - 58.00px) -50px -50px);">AaBbCcDd</div>
<div class="t" style="left:1032.90px;top:64.81px;font:normal 32px/1 'Liberation Sans';color:#111;transform:scaleX(0.9334);clip-path:inset(7.49px -50px -50px -50px);-webkit-text-stroke:0.5px #fff;">AaB</div>
<div class="t" style="left:1105.00px;top:79.64px;font:normal 12px/1 'Liberation Sans';color:#595959;clip-path:inset(-50px calc(100% - 58.00px) -50px -50px);letter-spacing:1.2px;">AaBbCcDd</div>
<div class="t" style="left:658.70px;top:139.62px;font:bold 13.33px/1 'Liberation Sans';color:#111;transform:scaleX(0.8662);clip-path:inset(10.38px -50px -50px -50px);">Most position: Equilibrium</div>
<div class="t" style="left:7.30px;top:689.54px;font:normal 12px/1 'Liberation Sans';color:#444;transform:scaleX(0.9026);">Page 1 of 1</div>
<div class="t" style="left:83.50px;top:689.54px;font:normal 12px/1 'Liberation Sans';color:#444;transform:scaleX(0.9374);">107 words</div>
<div class="t" style="left:187.40px;top:689.54px;font:normal 12px/1 'Liberation Sans';color:#444;transform:scaleX(0.9395);">English (United States)</div>
<div class="t" style="left:1330.00px;top:689.34px;font:normal 12px/1 'Liberation Sans';color:#444;transform:scaleX(0.8704);">100%</div>
<div class="t" style="left:1232.00px;top:717.03px;font:bold 10px/1 'Liberation Sans';color:#fff;transform:scaleX(0.8678);">K12</div>
<div class="t" style="left:1258.00px;top:731.84px;font:normal 12px/1 'Liberation Sans';color:#fff;transform:scaleX(0.8726);">ENG</div>
<div class="t" style="left:1300.00px;top:713.04px;font:normal 12px/1 'Liberation Sans';color:#fff;transform:scaleX(0.9306);">12:51 PM</div>
<div class="t" style="left:1301.00px;top:731.84px;font:normal 12px/1 'Liberation Sans';color:#fff;transform:scaleX(0.9536);">Thursday</div>
<div class="t" style="left:1295.80px;top:751.04px;font:normal 12px/1 'Liberation Sans';color:#fff;transform:scaleX(0.9456);">10/15/2020</div>
</body></html>
